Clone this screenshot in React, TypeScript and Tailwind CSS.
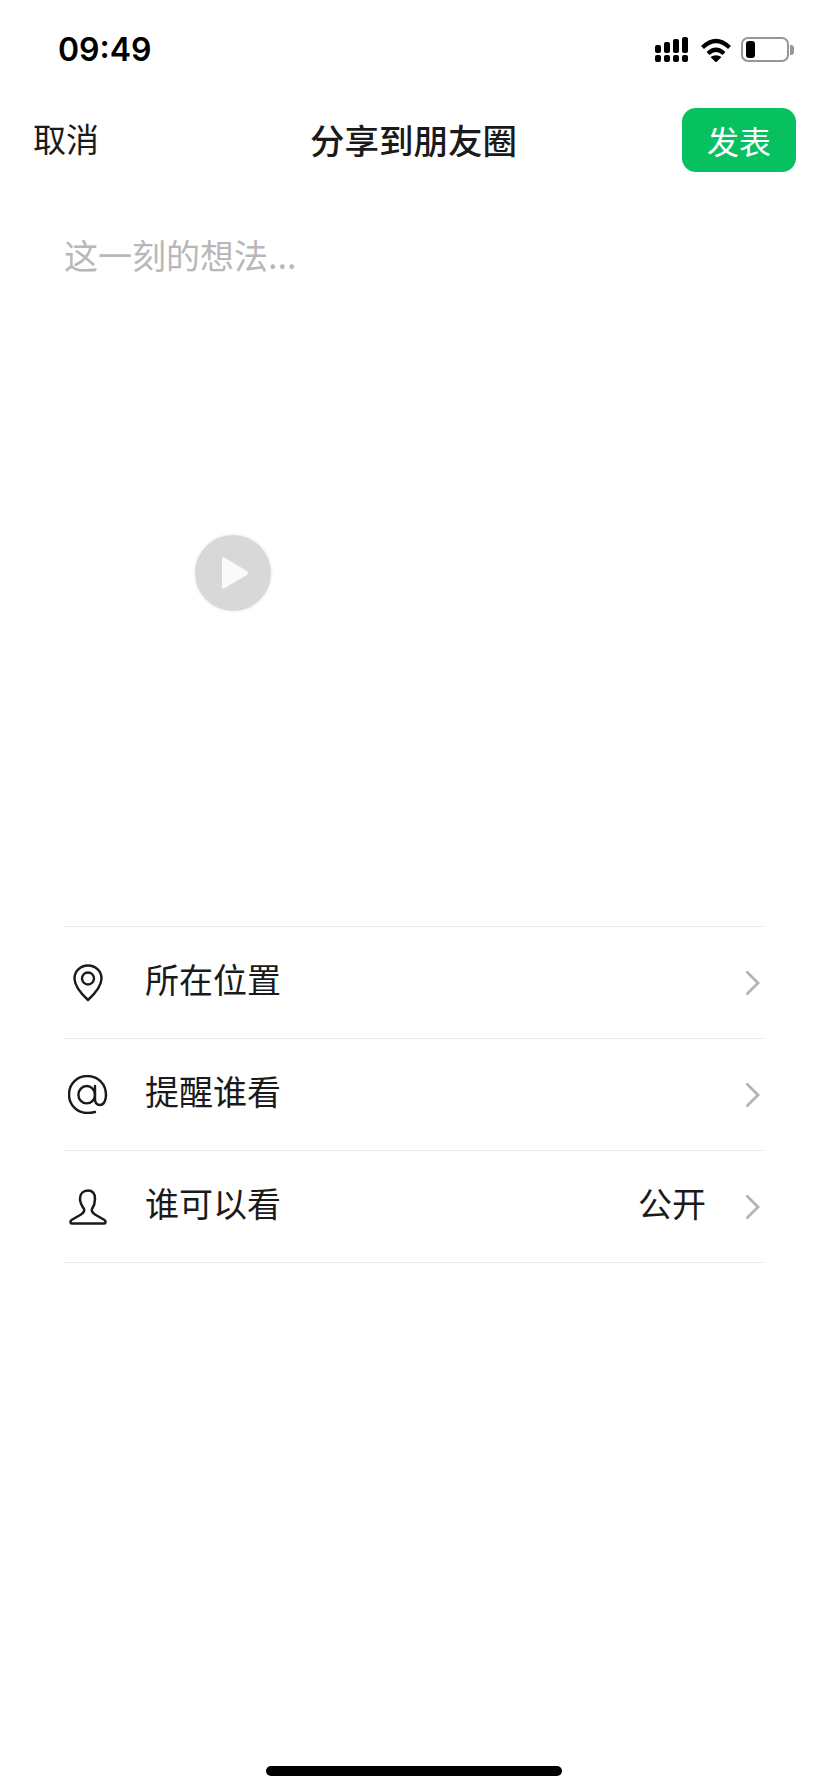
import { ReactNode } from 'react';

const cjk = "font-['Noto_Sans_CJK_SC','Noto_Sans',sans-serif]";

function SignalIcon() {
  return (
    <svg width="33" height="25" viewBox="0 0 33 25" fill="#000">
      <rect x="0" y="8" width="6" height="8" rx="2" />
      <rect x="9" y="5" width="6" height="11" rx="2" />
      <rect x="18" y="2" width="6" height="14" rx="2" />
      <rect x="27" y="0" width="6" height="16" rx="2" />
      <rect x="0" y="18" width="6" height="7" rx="2" />
      <rect x="9" y="18" width="6" height="7" rx="2" />
      <rect x="18" y="18" width="6" height="7" rx="2" />
      <rect x="27" y="18" width="6" height="7" rx="2" />
    </svg>
  );
}

function WifiIcon() {
  return (
    <svg width="32" height="24" viewBox="0 0 32 24" fill="none" stroke="#000" strokeWidth="4.2">
      <path d="M2.5 9.5 Q16 -3.5 29.5 9.5" />
      <path d="M8 15.5 Q16 8 24 15.5" />
      <path d="M10.5 19 L16 24.5 L21.5 19 Q16 15.5 10.5 19Z" fill="#000" stroke="none" />
    </svg>
  );
}

function BatteryIcon() {
  return (
    <div className="flex items-center">
      <div className="w-[48px] h-[25px] rounded-[7px] border-2 border-[#969696] px-[3px] py-[2px]">
        <div className="w-[9px] h-full rounded-[3px] bg-black" />
      </div>
      <div className="w-[4px] h-[10px] rounded-r-[3px] bg-[#969696] ml-[1px]" />
    </div>
  );
}

function PinIcon() {
  return (
    <svg width="30" height="38" viewBox="0 0 30 38" fill="none" stroke="#1a1a1a" strokeWidth="2.4">
      <path d="M15 1.5 C7 1.5 1.5 7.5 1.5 14.5 C1.5 21.5 8.5 30 15 36 C21.5 30 28.5 21.5 28.5 14.5 C28.5 7.5 23 1.5 15 1.5Z" strokeLinejoin="round" />
      <circle cx="15" cy="14.5" r="6" />
    </svg>
  );
}

function AtIcon() {
  return (
    <svg width="40" height="39" viewBox="0 0 40 39" fill="none" stroke="#1a1a1a" strokeWidth="2.4" strokeLinecap="round">
      <path d="M38 20 C38 9 30 1 19 1 C9 1 1 9 1 19.5 C1 30 9 38 19.5 38 C22 38 25 37.5 27 37" />
      <ellipse cx="18.7" cy="19.7" rx="8.3" ry="8.7" />
      <path d="M27 11 V24 C27 28 29 30 32 30 C36 30 38 25 38 20" />
    </svg>
  );
}

function PersonIcon() {
  return (
    <svg width="38" height="36" viewBox="0 0 38 36" fill="none" stroke="#1a1a1a" strokeWidth="2.5" strokeLinejoin="round">
      <path d="M19 1.5 C14 1.5 11 5 11 10 C11 14 13 17 15 20 C16 22 14 24 12 25.5 L2.5 31 C1 32 1 34.5 3 34.5 L35 34.5 C37 34.5 37 32 35.5 31 L26 25.5 C24 24 22 22 23 20 C25 17 26 14 26 10 C26 5 24 1.5 19 1.5Z" />
    </svg>
  );
}

function Chevron() {
  return (
    <svg width="15" height="26" viewBox="0 0 15 26" fill="none" stroke="#b4b4b4" strokeWidth="2.8">
      <path d="M1.5 1.5 L13 13 L1.5 24.5" />
    </svg>
  );
}

function Row({ icon, label, value, iconPad }: { icon: ReactNode; label: string; value?: string; iconPad: string }) {
  return (
    <div className="h-[112px] flex items-center border-b border-[#e8e8e8]">
      <div className={`w-[81px] flex items-center ${iconPad}`}>{icon}</div>
      <span className="flex-1 text-[34px] leading-[46px] pb-[7px] text-[#1a1a1a]">{label}</span>
      {value && <span className="text-[34px] leading-[46px] pb-[7px] text-[#1a1a1a] mr-[39px]">{value}</span>}
      <div className="mr-[4px] flex">
        <Chevron />
      </div>
    </div>
  );
}

export default function App() {
  return (
    <div className={`w-[828px] h-[1792px] bg-white flex flex-col overflow-hidden ${cjk}`}>
      <div className="h-[88px] flex items-center justify-between pl-[58px] pr-[34px] pt-[11px]">
        <span className="font-['Inter',sans-serif] text-[32px] font-semibold text-black">09:49</span>
        <div className="flex items-center">
          <SignalIcon />
          <div className="w-[12px]" />
          <WifiIcon />
          <div className="w-[9px]" />
          <BatteryIcon />
        </div>
      </div>

      <div className="mt-[20px] h-[64px] flex items-center justify-between pl-[33px] pr-[32px] relative">
        <span className="text-[33px] leading-[46px] pb-[4px] text-[#1a1a1a]">取消</span>
        <span className="absolute left-[310px] text-[34.5px] leading-[46px] pb-[2px] font-medium text-[#1a1a1a]">分享到朋友圈</span>
        <button className="w-[114px] h-[64px] rounded-[14px] bg-[#07c160] text-white text-[32px] flex items-center justify-center">
          发表
        </button>
      </div>

      <div className="mt-[58px] pl-[64px] text-[34px] leading-[50px] text-[#b8b8b8]">这一刻的想法...</div>

      <div className="mt-[253px] ml-[193px] w-[80px] h-[80px] rounded-full bg-[#d8d8d8] border-2 border-[#f8f8f8] flex items-center justify-center">
        <svg width="30" height="34" viewBox="0 0 30 34" className="ml-[6px]" fill="#fafafa">
          <path d="M3 1.5 L26 15 Q28 17 26 19 L3 32.5 Q1 33.5 1 31.5 V2.5 Q1 .5 3 1.5Z" />
        </svg>
      </div>

      <div className="mt-[313px] mx-[64px] border-t border-[#e8e8e8]">
        <Row icon={<PinIcon />} iconPad="pl-[9px]" label="所在位置" />
        <Row icon={<AtIcon />} iconPad="pl-[4px]" label="提醒谁看" />
        <Row icon={<PersonIcon />} iconPad="pl-[5px]" label="谁可以看" value="公开" />
      </div>

      <div className="mt-auto mb-[16px] mx-auto w-[296px] h-[10px] rounded-full bg-black" />
    </div>
  );
}
